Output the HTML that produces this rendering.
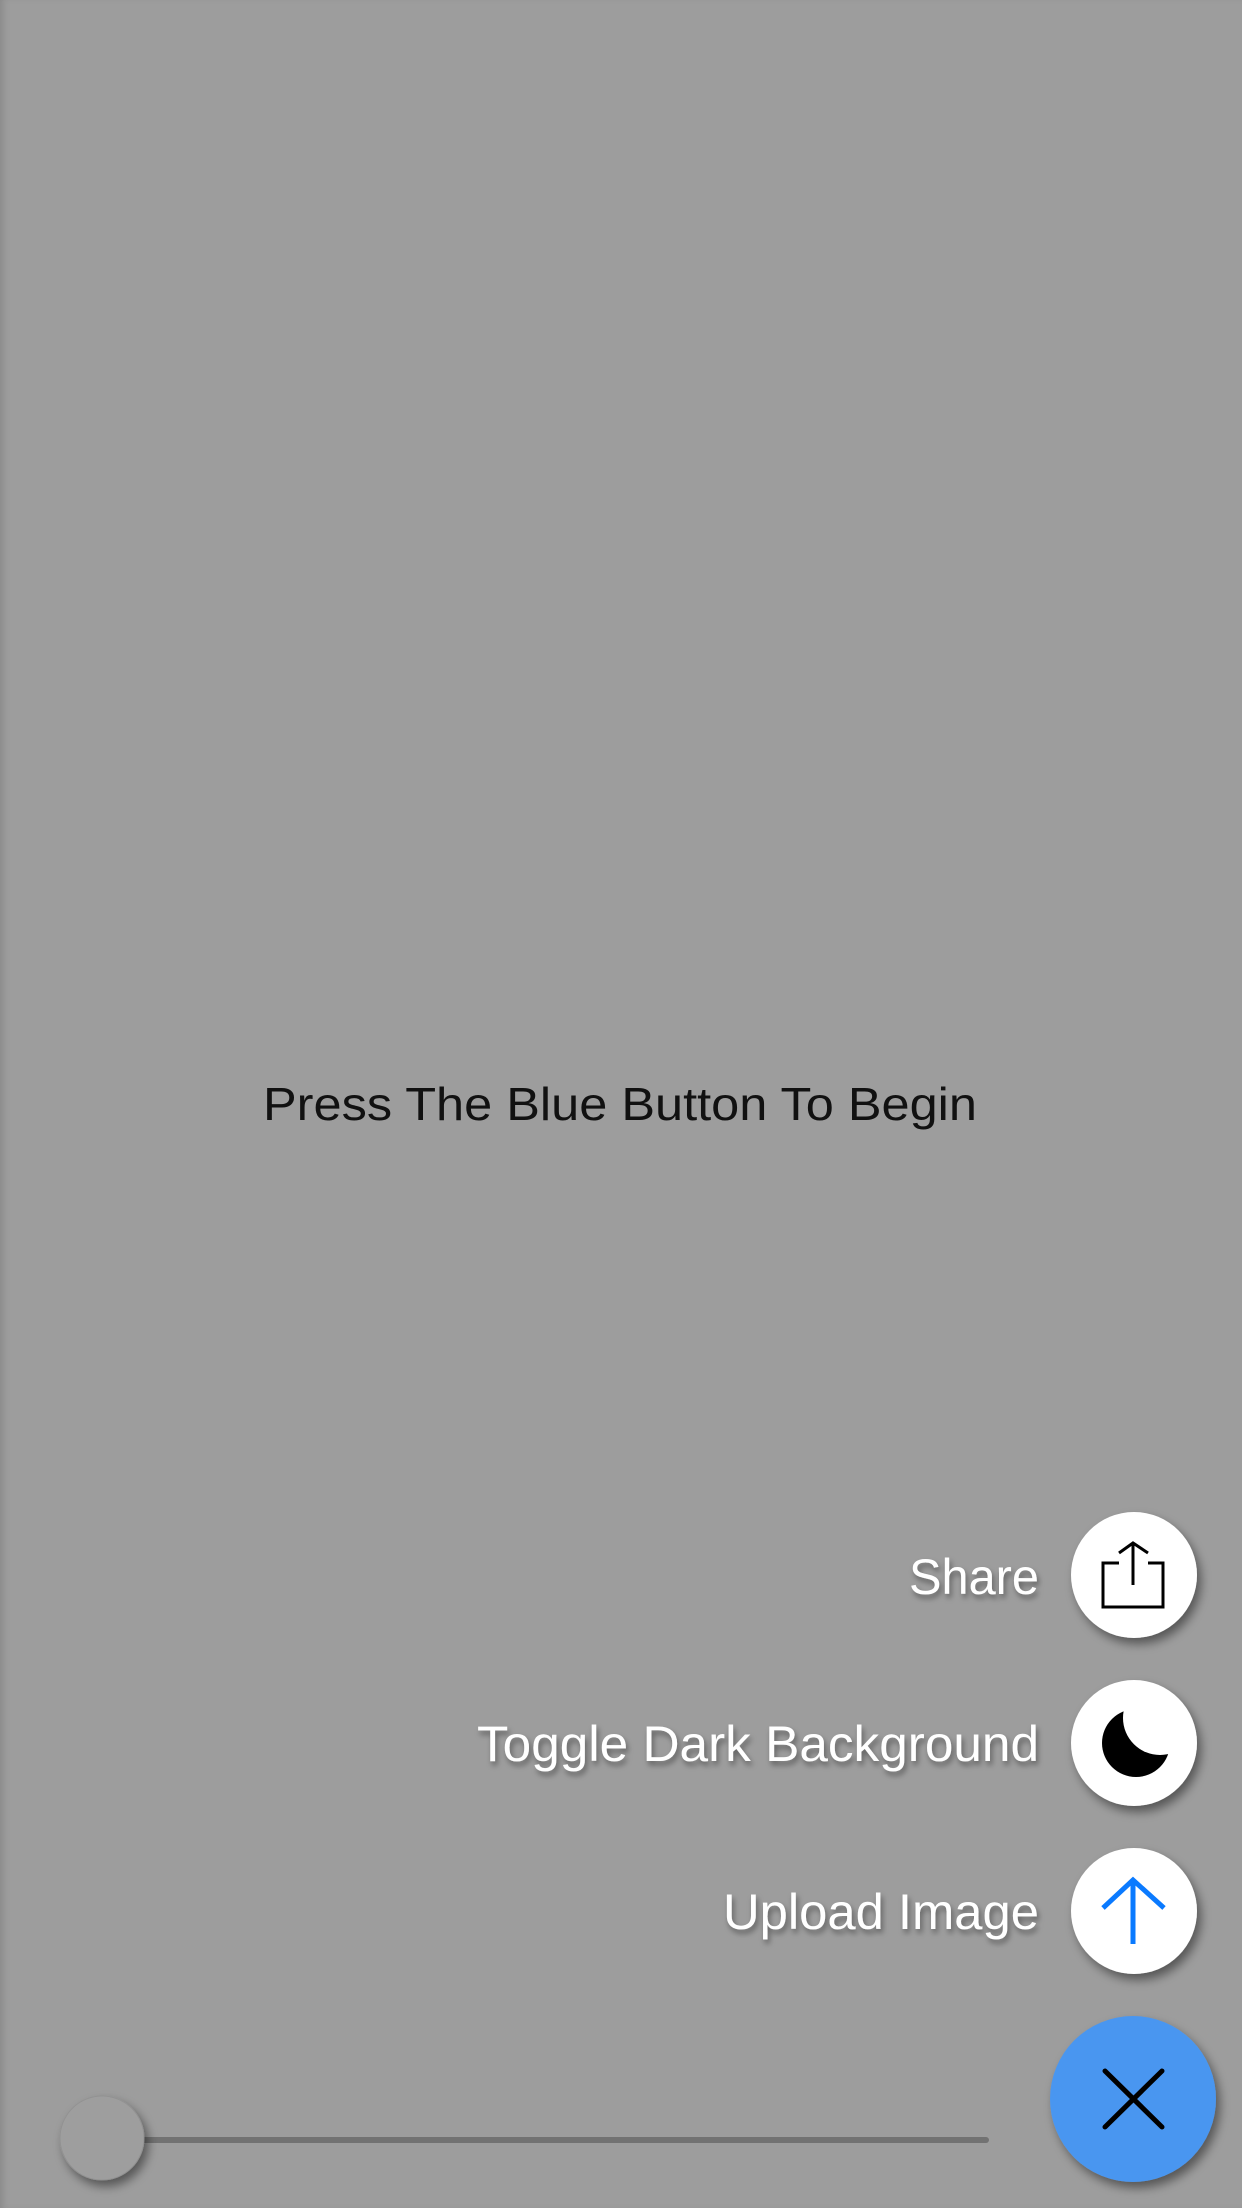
<!DOCTYPE html>
<html><head><meta charset="utf-8"><style>
html,body{margin:0;padding:0;}
body{width:1242px;height:2208px;background:#9d9d9d;overflow:hidden;position:relative;box-shadow:inset 6px 0 8px -4px rgba(0,0,0,0.15);}
svg{position:absolute;left:0;top:0;}
</style></head><body>
<svg width="1242" height="2208" viewBox="0 0 1242 2208" xmlns="http://www.w3.org/2000/svg">
<defs>
<filter id="sh" x="-50%" y="-50%" width="200%" height="200%"><feDropShadow dx="4" dy="6" stdDeviation="5" flood-color="#000" flood-opacity="0.45"/></filter>
<filter id="ts" x="-10%" y="-30%" width="120%" height="160%"><feDropShadow dx="2" dy="4" stdDeviation="3" flood-color="#000" flood-opacity="0.4"/></filter>
<mask id="mm" maskUnits="userSpaceOnUse" x="1090" y="1690" width="100" height="100">
<rect x="1090" y="1690" width="100" height="100" fill="#fff"/>
<circle cx="1160" cy="1718" r="37" fill="#000"/>
</mask>
</defs>
<text x="620" y="1120" text-anchor="middle" font-family="Liberation Sans, sans-serif" font-size="46" fill="#111" textLength="714" lengthAdjust="spacingAndGlyphs">Press The Blue Button To Begin</text>

<g font-family="Liberation Sans, sans-serif" font-size="50" fill="#fff" text-anchor="end" filter="url(#ts)">
<text x="1039" y="1594" textLength="130" lengthAdjust="spacingAndGlyphs">Share</text>
<text x="1039" y="1761" textLength="562" lengthAdjust="spacingAndGlyphs">Toggle Dark Background</text>
<text x="1039" y="1929" textLength="316" lengthAdjust="spacingAndGlyphs">Upload Image</text>
</g>

<circle cx="1134" cy="1575" r="63" fill="#fff" filter="url(#sh)"/>
<circle cx="1134" cy="1743" r="63" fill="#fff" filter="url(#sh)"/>
<circle cx="1134" cy="1911" r="63" fill="#fff" filter="url(#sh)"/>

<!-- share icon -->
<g stroke="#000" stroke-width="3" fill="none">
<path d="M1119 1563 H1103 V1607 H1163 V1563 H1148"/>
<path d="M1133 1585 V1543"/>
<path d="M1119 1553 L1133 1543 L1148 1553"/>
</g>
<!-- moon -->
<circle cx="1136" cy="1743" r="34" fill="#000" mask="url(#mm)"/>
<!-- upload arrow -->
<g stroke="#0a7aff" stroke-width="5" fill="none">
<path d="M1133 1944 V1880"/>
<path d="M1103 1908 L1133 1880 L1164 1908"/>
</g>

<!-- blue button -->
<circle cx="1133" cy="2099" r="83" fill="#4a96f0" filter="url(#sh)"/>
<g stroke="#000" stroke-width="5" stroke-linecap="round">
<path d="M1105 2071 L1162 2127 M1162 2071 L1105 2127"/>
</g>

<!-- slider -->
<rect x="60" y="2137" width="929" height="6" rx="3" fill="#727272"/>
<circle cx="102" cy="2138" r="42" fill="#9e9e9e" stroke="#929292" stroke-width="1" filter="url(#sh)"/>
</svg>
</body></html>
